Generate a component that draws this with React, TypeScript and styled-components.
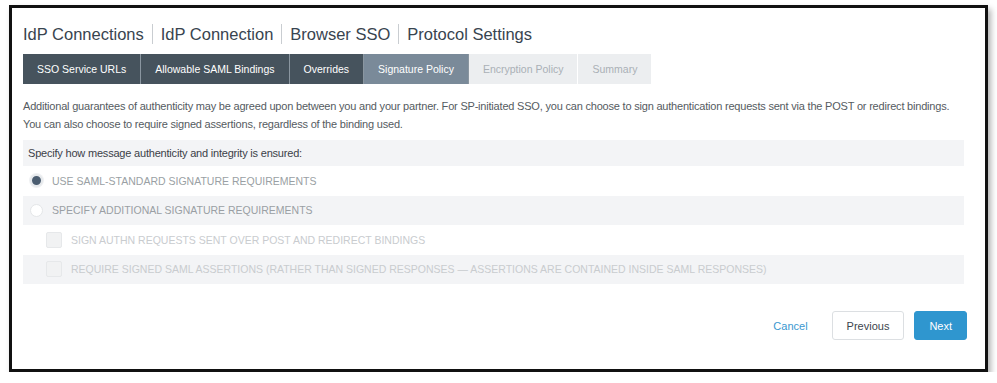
import React from 'react';
import styled, { createGlobalStyle } from 'styled-components';

const GlobalStyle = createGlobalStyle`
    html, body {
        margin: 0;
        padding: 0;
        background: #ffffff;
        font-family: 'Liberation Sans', Arial, sans-serif;
    }
`;

const Page = styled.div`
    padding: 5px 0 0 9px;
`;

const Frame = styled.div`
    box-sizing: border-box;
    width: 979px;
    height: 367px;
    border: 3px solid #111;
    box-shadow: 3px 4px 6px rgba(0, 0, 0, 0.3);
    background: #fff;
    padding: 15px 21px 0 11px;
    display: flex;
    flex-direction: column;
`;

const Title = styled.h1`
    margin: 0;
    font-size: 16.5px;
    line-height: 22px;
    font-weight: normal;
    color: #38444f;
    display: flex;
    align-items: center;
`;

const Sep = styled.span`
    display: inline-block;
    width: 1px;
    height: 20px;
    background: #c9cdd1;
    margin: 0 8px;
`;

const Tabs = styled.div`
    display: flex;
    margin-top: 9px;
    height: 30px;
`;

const Tab = styled.div<{ $state: 'done' | 'active' | 'todo' }>`
    display: flex;
    align-items: center;
    padding: 0 14px;
    font-size: 10.5px;
    border-right: 1px solid ${p => (p.$state === 'todo' ? '#ffffff' : '#8a96a0')};
    background: ${p =>
        p.$state === 'done' ? '#46535d' : p.$state === 'active' ? '#7a8a99' : '#eceef0'};
    color: ${p => (p.$state === 'todo' ? '#aab0b6' : '#ffffff')};
`;

const Intro = styled.p`
    margin: 13px 0 7px;
    font-size: 11px;
    letter-spacing: -0.2px;
    line-height: 18px;
    color: #555b61;
`;

const Section = styled.div`
    display: flex;
    flex-direction: column;
`;

const SectionHead = styled.div`
    background: #f3f4f6;
    height: 26px;
    display: flex;
    align-items: center;
    padding-left: 5px;
    font-size: 11px;
    letter-spacing: -0.2px;
    color: #3b4148;
`;

const OptionRow = styled.div<{ $shaded?: boolean; $indent?: boolean }>`
    height: 29.5px;
    display: flex;
    align-items: center;
    gap: 9px;
    padding-left: ${p => (p.$indent ? '23px' : '7px')};
    background: ${p => (p.$shaded ? '#f3f4f6' : 'transparent')};
`;

const Radio = styled.span<{ $checked?: boolean }>`
    box-sizing: border-box;
    width: 13px;
    height: 13px;
    border-radius: 50%;
    background: ${p => (p.$checked ? '#4b5d70' : '#ffffff')};
    border: ${p => (p.$checked ? '2px solid #e6e9ec' : '1px solid #e4e6e8')};
    box-shadow: ${p => (p.$checked ? '0 0 0 1px #f0f1f3' : 'none')};
`;

const Check = styled.span`
    box-sizing: border-box;
    width: 16px;
    height: 16px;
    border-radius: 2px;
    border: 1px solid #e6e8ea;
    background: #f1f2f3;
`;

const OptionLabel = styled.span<{ $faint?: boolean }>`
    font-size: 10.5px;
    text-transform: uppercase;
    color: ${p => (p.$faint ? '#c9cccf' : '#9a9fa4')};
`;

const Footer = styled.div`
    display: flex;
    justify-content: flex-end;
    align-items: center;
    margin-top: 27px;
    margin-right: -3px;
    gap: 10px;
`;

const LinkButton = styled.button`
    border: none;
    background: none;
    font-family: inherit;
    font-size: 11px;
    color: #3a98d0;
    padding: 0;
    margin-right: 14px;
`;

const Button = styled.button<{ $primary?: boolean }>`
    height: 29px;
    box-sizing: border-box;
    padding: 0 14px;
    font-family: inherit;
    font-size: 11px;
    border-radius: 3px;
    border: 1px solid ${p => (p.$primary ? '#2f96cf' : '#dcdfe2')};
    background: ${p => (p.$primary ? '#2f96cf' : '#ffffff')};
    color: ${p => (p.$primary ? '#ffffff' : '#3d454d')};
`;

const crumbs = ['IdP Connections', 'IdP Connection', 'Browser SSO', 'Protocol Settings'];

const tabs: { label: string; state: 'done' | 'active' | 'todo' }[] = [
    { label: 'SSO Service URLs', state: 'done' },
    { label: 'Allowable SAML Bindings', state: 'done' },
    { label: 'Overrides', state: 'done' },
    { label: 'Signature Policy', state: 'active' },
    { label: 'Encryption Policy', state: 'todo' },
    { label: 'Summary', state: 'todo' },
];

export default function App() {
    return (
        <Page>
            <GlobalStyle />
            <Frame>
                <Title>
                    {crumbs.map((c, i) => (
                        <React.Fragment key={c}>
                            {i > 0 && <Sep />}
                            {c}
                        </React.Fragment>
                    ))}
                </Title>

                <Tabs>
                    {tabs.map(t => (
                        <Tab key={t.label} $state={t.state}>
                            {t.label}
                        </Tab>
                    ))}
                </Tabs>

                <Intro>
                    Additional guarantees of authenticity may be agreed upon between you and your partner.
                    For SP-initiated SSO, you can choose to sign authentication requests sent via the POST
                    or redirect bindings.
                    <br />
                    You can also choose to require signed assertions, regardless of the binding used.
                </Intro>

                <Section>
                    <SectionHead>Specify how message authenticity and integrity is ensured:</SectionHead>
                    <OptionRow>
                        <Radio $checked />
                        <OptionLabel>Use SAML-standard signature requirements</OptionLabel>
                    </OptionRow>
                    <OptionRow $shaded>
                        <Radio />
                        <OptionLabel>Specify additional signature requirements</OptionLabel>
                    </OptionRow>
                    <OptionRow $indent>
                        <Check />
                        <OptionLabel $faint>Sign AuthN requests sent over POST and redirect bindings</OptionLabel>
                    </OptionRow>
                    <OptionRow $shaded $indent>
                        <Check />
                        <OptionLabel $faint>
                            Require signed SAML assertions (rather than signed responses — assertions are
                            contained inside SAML responses)
                        </OptionLabel>
                    </OptionRow>
                </Section>

                <Footer>
                    <LinkButton>Cancel</LinkButton>
                    <Button>Previous</Button>
                    <Button $primary>Next</Button>
                </Footer>
            </Frame>
        </Page>
    );
}
